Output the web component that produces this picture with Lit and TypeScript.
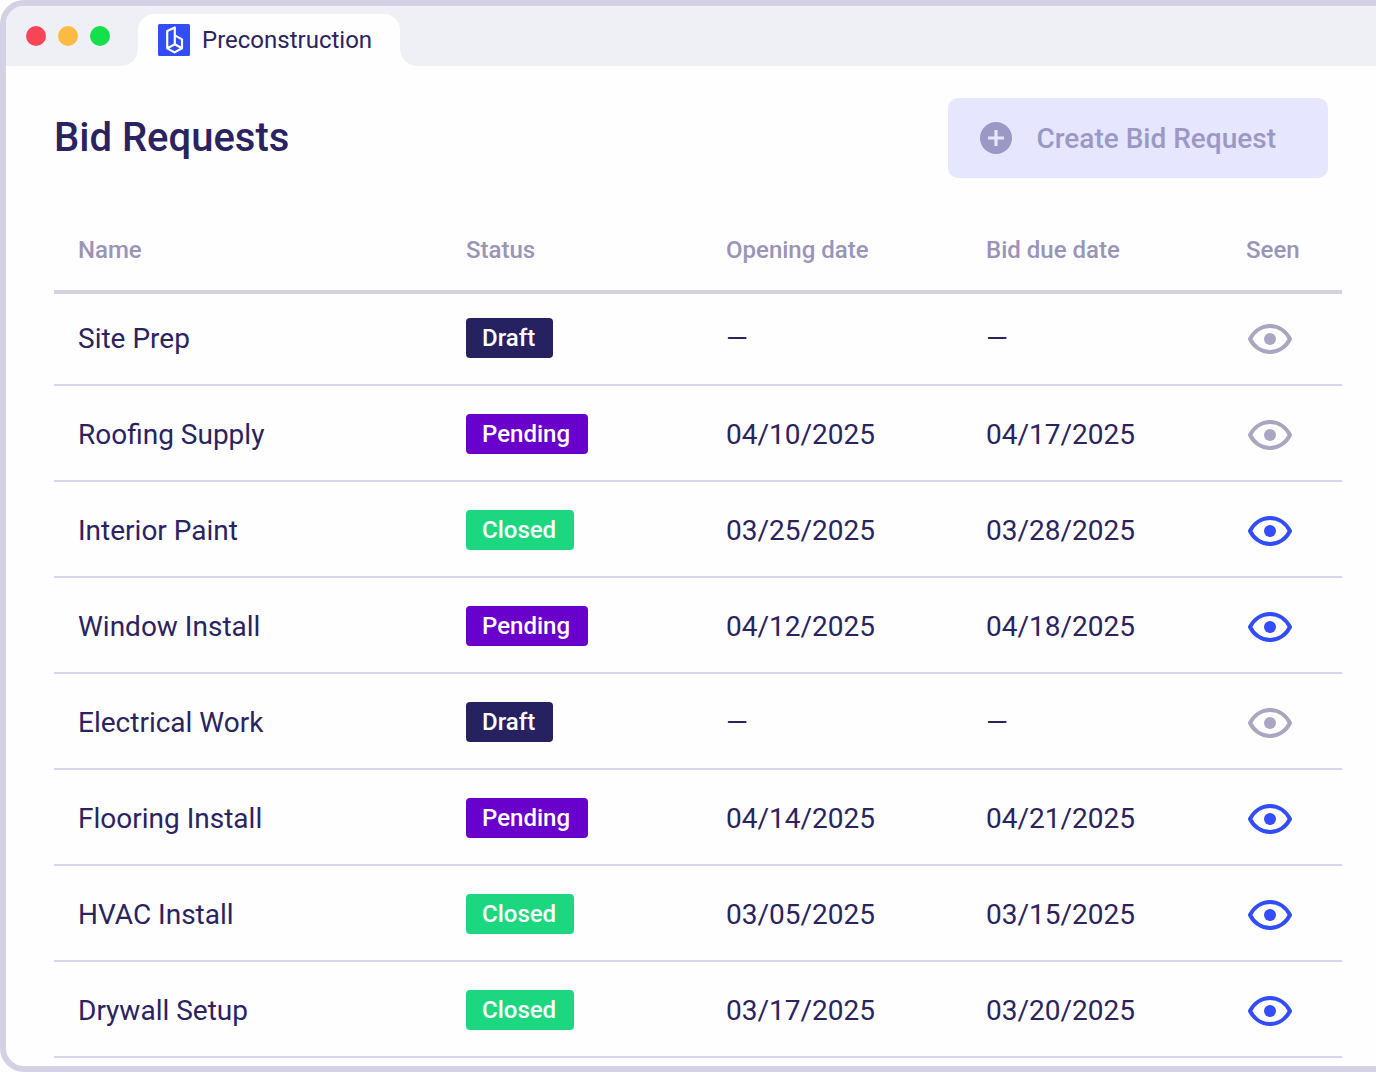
import { LitElement, html, css } from "lit";
import { customElement, property } from "lit/decorators.js";

type Status = "Draft" | "Pending" | "Closed";

interface Bid {
  name: string;
  status: Status;
  opening: string;
  due: string;
  seen: boolean;
}

const BIDS: Bid[] = [
  { name: "Site Prep", status: "Draft", opening: "—", due: "—", seen: false },
  { name: "Roofing Supply", status: "Pending", opening: "04/10/2025", due: "04/17/2025", seen: false },
  { name: "Interior Paint", status: "Closed", opening: "03/25/2025", due: "03/28/2025", seen: true },
  { name: "Window Install", status: "Pending", opening: "04/12/2025", due: "04/18/2025", seen: true },
  { name: "Electrical Work", status: "Draft", opening: "—", due: "—", seen: false },
  { name: "Flooring Install", status: "Pending", opening: "04/14/2025", due: "04/21/2025", seen: true },
  { name: "HVAC Install", status: "Closed", opening: "03/05/2025", due: "03/15/2025", seen: true },
  { name: "Drywall Setup", status: "Closed", opening: "03/17/2025", due: "03/20/2025", seen: true },
];

@customElement("status-badge")
class StatusBadge extends LitElement {
  @property() status: Status = "Draft";

  static styles = css`
    :host {
      display: block;
    }
    .badge {
      display: block;
      width: fit-content;
      padding: 0 18px 0 16px;
      border-radius: 4px;
      font-size: 24px;
      font-weight: 500;
      line-height: 40px;
      color: #fff;
    }
    .draft {
      background: #262262;
    }
    .pending {
      background: #6a00cb;
    }
    .closed {
      background: #1cd780;
    }
  `;

  render() {
    return html`<span class="badge ${this.status.toLowerCase()}">${this.status}</span>`;
  }
}

@customElement("seen-icon")
class SeenIcon extends LitElement {
  @property({ type: Boolean }) seen = false;

  static styles = css`
    :host {
      display: block;
    }
    .eye {
      display: block;
      width: 48px;
      height: 40px;
      color: #aaa5c1;
    }
    .seen {
      color: #324df5;
    }
  `;

  render() {
    return html`<svg
      class="eye ${this.seen ? "seen" : ""}"
      viewBox="0 3 48 40"
      role="img"
      aria-label=${this.seen ? "Seen" : "Not seen"}
    >
      <path
        d="M4 24C8 16.2 15.4 11 24 11S40 16.2 44 24C40 31.8 32.6 37 24 37S8 31.8 4 24Z"
        fill="none"
        stroke="currentColor"
        stroke-width="4"
        stroke-linejoin="round"
      />
      <circle cx="24" cy="24" r="6" fill="currentColor" />
    </svg>`;
  }
}

@customElement("app-root")
class AppRoot extends LitElement {
  static styles = css`
    :host {
      display: block;
      font-family: Roboto, "Liberation Sans", sans-serif;
      color: #2b2360;
    }
    .window {
      border: 6px solid #d4d1e5;
      border-right: 0;
      border-radius: 24px 0 0 24px;
      overflow: hidden;
      background: #fefefe;
    }
    .tabbar {
      display: flex;
      height: 60px;
      padding-left: 20px;
      background: #eff0f6;
    }
    .lights {
      display: flex;
      align-items: center;
      gap: 12px;
      margin-right: 28px;
    }
    .light {
      width: 20px;
      height: 20px;
      border-radius: 50%;
    }
    .red {
      background: #f64556;
    }
    .amber {
      background: #fbba44;
    }
    .green {
      background: #13e04a;
    }
    .tab {
      position: relative;
      align-self: flex-end;
      display: flex;
      align-items: center;
      gap: 12px;
      height: 52px;
      padding: 0 28px 0 20px;
      border-radius: 16px 16px 0 0;
      background: #fefefe;
      color: inherit;
      font-size: 24px;
      line-height: 32px;
      text-decoration: none;
    }
    .tab::before,
    .tab::after {
      content: "";
      position: absolute;
      bottom: 0;
      width: 16px;
      height: 16px;
    }
    .tab::before {
      right: 100%;
      background: radial-gradient(circle at 0 0, transparent 15px, #fefefe 16px);
    }
    .tab::after {
      left: 100%;
      background: radial-gradient(circle at 100% 0, transparent 15px, #fefefe 16px);
    }
    .logo {
      display: block;
      width: 32px;
      height: 32px;
    }
    .content {
      padding: 32px 34px 8px 48px;
    }
    .heading {
      display: flex;
      align-items: center;
      justify-content: space-between;
      margin-right: 14px;
    }
    .title {
      margin: 0;
      font-size: 40px;
      font-weight: 500;
      line-height: 50px;
    }
    .create {
      display: flex;
      align-items: center;
      gap: 24px;
      height: 80px;
      padding: 0 52px 0 32px;
      border: 0;
      border-radius: 10px;
      background: #e6e6ff;
      color: #9b98c6;
      font: inherit;
      font-size: 28px;
      font-weight: 500;
    }
    .plus {
      display: block;
      width: 32px;
      height: 32px;
    }
    .bids {
      width: 100%;
      margin-top: 32px;
      border-collapse: separate;
      border-spacing: 0;
      table-layout: fixed;
    }
    .medium {
      width: 260px;
    }
    .narrow {
      width: 120px;
    }
    .head {
      padding: 24px 0 24px 24px;
      border-bottom: 4px solid #d4d1e0;
      color: #9a94b6;
      font-size: 24px;
      font-weight: 500;
      line-height: 32px;
      text-align: left;
    }
    .cell {
      padding: 28px 0 24px 24px;
      border-bottom: 2px solid #d8d5ea;
      font-size: 28px;
      font-weight: 400;
      line-height: 42px;
      text-align: left;
      vertical-align: top;
    }
    .row:first-child .cell {
      padding-top: 24px;
    }
  `;

  render() {
    return html`
      <div class="window">
        <nav class="tabbar" aria-label="Tabs">
          <div class="lights">
            <span class="light red"></span>
            <span class="light amber"></span>
            <span class="light green"></span>
          </div>
          <a class="tab" href="#preconstruction">
            <svg class="logo" viewBox="0 0 32 32" aria-hidden="true">
              <rect width="32" height="32" rx="1.5" fill="#324df5" />
              <path
                d="M9.2 24.4V7L16.8 3.4V20.2L9.2 24.4L16.5 28.4L24 24.2V15.4L16.8 11.4M16.8 20.2L24 24.2"
                fill="none"
                stroke="#fff"
                stroke-width="2.2"
                stroke-linejoin="round"
              />
            </svg>
            <span>Preconstruction</span>
          </a>
        </nav>
        <main class="content">
          <header class="heading">
            <h1 class="title">Bid Requests</h1>
            <button class="create" type="button">
              <svg class="plus" viewBox="0 0 32 32" aria-hidden="true">
                <circle cx="16" cy="16" r="16" fill="currentColor" />
                <path d="M16 8V24M8 16H24" stroke="#e6e6ff" stroke-width="3.2" />
              </svg>
              <span>Create Bid Request</span>
            </button>
          </header>
          <table class="bids">
            <colgroup>
              <col />
              <col class="medium" />
              <col class="medium" />
              <col class="medium" />
              <col class="narrow" />
            </colgroup>
            <thead>
              <tr>
                <th class="head" scope="col">Name</th>
                <th class="head" scope="col">Status</th>
                <th class="head" scope="col">Opening date</th>
                <th class="head" scope="col">Bid due date</th>
                <th class="head" scope="col">Seen</th>
              </tr>
            </thead>
            <tbody>
              ${BIDS.map(
                (bid) => html`<tr class="row">
                  <th class="cell" scope="row">${bid.name}</th>
                  <td class="cell"><status-badge .status=${bid.status}></status-badge></td>
                  <td class="cell">${bid.opening}</td>
                  <td class="cell">${bid.due}</td>
                  <td class="cell"><seen-icon .seen=${bid.seen}></seen-icon></td>
                </tr>`
              )}
            </tbody>
          </table>
        </main>
      </div>
    `;
  }
}
